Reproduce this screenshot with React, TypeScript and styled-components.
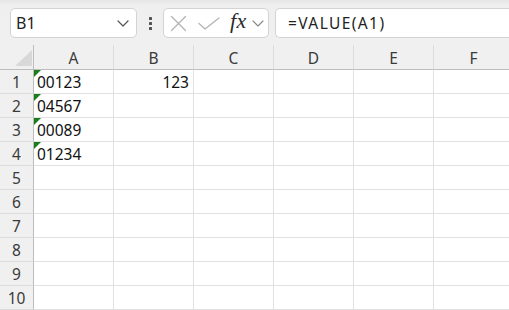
import { Fragment } from 'react'
import styled, { createGlobalStyle, css } from 'styled-components'

const GlobalStyle = createGlobalStyle`
  html, body {
    margin: 0;
    padding: 0;
    background: #ffffff;
    overflow: hidden;
  }
  body {
    font-family: 'Noto Sans', 'Open Sans', sans-serif;
    color: #222;
  }
  * {
    box-sizing: border-box;
  }
`

const Page = styled.div`
  width: 509px;
  height: 310px;
  display: flex;
  flex-direction: column;
  overflow: hidden;
`

/* 상단 수식 입력줄 */
const Toolbar = styled.div`
  height: 45px;
  flex: none;
  display: flex;
  align-items: flex-start;
  padding: 8px 0 0 10px;
  background: linear-gradient(#e6e6e6 0, #efefef 5px, #f0f0f0 100%);
`

const Box = styled.div`
  height: 30px;
  background: #ffffff;
  border: 1px solid #d3d3d3;
  border-radius: 5px;
  display: flex;
  align-items: center;
`

const NameBox = styled(Box)`
  width: 127px;
  padding: 0 7px 0 5px;
  justify-content: space-between;
  font-size: 16px;
  color: #222;
`

const Dots = styled.div`
  width: 26px;
  height: 30px;
  display: flex;
  flex-direction: column;
  align-items: center;
  justify-content: center;
  gap: 2px;
  padding-left: 1px;

  span {
    width: 3px;
    height: 3px;
    background: #555;
    border-radius: 0.5px;
  }
`

const FxBox = styled(Box)`
  width: 106px;
  padding-left: 6px;
`

const FxLabel = styled.span`
  font-family: 'Liberation Serif', 'DejaVu Serif', serif;
  font-style: italic;
  font-weight: normal;
  font-size: 22px;
  color: #2a2a2a;
  margin: -4px 5px 0 10px;
  letter-spacing: 0.5px;
`

const FormulaBar = styled(Box)`
  flex: 1;
  margin-left: 6px;
  border-right: none;
  border-radius: 5px 0 0 5px;
  padding-left: 12px;
  font-size: 15.5px;
  letter-spacing: 1.4px;
  color: #222;
`

/* 시트 영역 */
const Sheet = styled.div`
  display: grid;
  grid-template-columns: 34px repeat(6, 80px);
  grid-template-rows: 25px repeat(10, 24px);
  background: #ffffff;
`

const Corner = styled.div`
  position: relative;
  background: #f0f0f0;
  border-right: 1px solid #bdbdbd;
  border-bottom: 1px solid #bdbdbd;

  &::after {
    content: '';
    position: absolute;
    right: 1px;
    bottom: 3px;
    width: 17px;
    height: 16px;
    background: #d8d8d8;
    clip-path: polygon(100% 0, 100% 100%, 0 100%);
  }
`

const ColHead = styled.div`
  background: #f0f0f0;
  border-right: 1px solid #dcdcdc;
  border-bottom: 1px solid #bdbdbd;
  display: flex;
  align-items: center;
  justify-content: center;
  font-size: 15.5px;
  color: #3a3a3a;
  padding-top: 1px;
`

const RowHead = styled.div`
  background: #f0f0f0;
  border-right: 1px solid #bdbdbd;
  border-bottom: 1px solid #dcdcdc;
  display: flex;
  align-items: center;
  justify-content: center;
  font-size: 15.5px;
  color: #3a3a3a;
`

const Cell = styled.div<{ $align?: 'left' | 'right'; $flag?: boolean }>`
  position: relative;
  border-right: 1px solid #e1e1e1;
  border-bottom: 1px solid #e1e1e1;
  display: flex;
  align-items: center;
  justify-content: ${({ $align }) => ($align === 'right' ? 'flex-end' : 'flex-start')};
  padding: 1px 4px 0 3px;
  font-size: 15.5px;
  color: #111;

  ${({ $flag }) =>
    $flag &&
    css`
      &::before {
        content: '';
        position: absolute;
        top: 0;
        left: 0;
        width: 7px;
        height: 7px;
        background: #1b7d1b;
        clip-path: polygon(0 0, 100% 0, 0 100%);
      }
    `}
`

const columns = ['A', 'B', 'C', 'D', 'E', 'F']

// 행별 데이터 (A열은 텍스트로 저장된 숫자)
const data: Record<number, { a?: string; b?: string }> = {
  1: { a: '00123', b: '123' },
  2: { a: '04567' },
  3: { a: '00089' },
  4: { a: '01234' },
}

const Chevron = () => (
  <svg width="12" height="7" viewBox="0 0 12 7" fill="none">
    <path d="M1 1l5 5 5-5" stroke="#555" strokeWidth="1.2" strokeLinecap="round" strokeLinejoin="round" />
  </svg>
)

const App = () => {
  return (
    <Page>
      <GlobalStyle />
      <Toolbar>
        <NameBox>
          <span>B1</span>
          <Chevron />
        </NameBox>
        <Dots>
          <span />
          <span />
          <span />
        </Dots>
        <FxBox>
          <svg width="17" height="17" viewBox="0 0 17 17" fill="none">
            <path d="M1.5 1.5l14 14M15.5 1.5l-14 14" stroke="#b3b3b3" strokeWidth="1.3" strokeLinecap="round" />
          </svg>
          <svg width="22" height="13" viewBox="0 0 22 13" fill="none" style={{ marginLeft: 11 }}>
            <path d="M1 6.5l6 5.5L21 1" stroke="#b3b3b3" strokeWidth="1.3" strokeLinecap="round" strokeLinejoin="round" />
          </svg>
          <FxLabel>fx</FxLabel>
          <svg width="12" height="7" viewBox="0 0 12 7" fill="none">
            <path d="M1 1l5 5 5-5" stroke="#888" strokeWidth="1.1" strokeLinecap="round" strokeLinejoin="round" />
          </svg>
        </FxBox>
        <FormulaBar>=VALUE(A1)</FormulaBar>
      </Toolbar>

      <Sheet>
        <Corner />
        {columns.map((c) => (
          <ColHead key={c}>{c}</ColHead>
        ))}
        {Array.from({ length: 10 }, (_, i) => i + 1).map((row) => (
          <Fragment key={row}>
            <RowHead>{row}</RowHead>
            {columns.map((c) => {
              const val = c === 'A' ? data[row]?.a : c === 'B' ? data[row]?.b : undefined
              return (
                <Cell key={c} $align={c === 'B' ? 'right' : 'left'} $flag={c === 'A' && !!val}>
                  {val}
                </Cell>
              )
            })}
          </Fragment>
        ))}
      </Sheet>
    </Page>
  )
}

export default App
